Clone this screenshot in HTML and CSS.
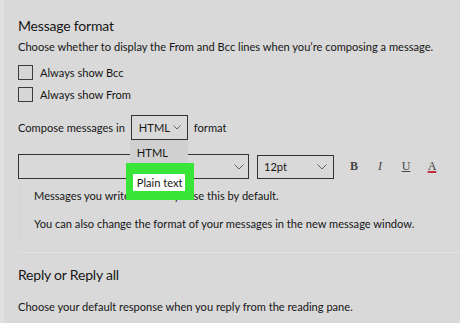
FILE: index.html
```html
<!DOCTYPE html>
<html lang="en">
<head>
    <meta charset="utf-8" />
    <title>Message format</title>
    <link rel="stylesheet" href="styles.css">
</head>
<body>
    <div class="pane">
        <section class="group first">
            <h2>Message format</h2>
            <p class="desc">Choose whether to display the From and Bcc lines when you’re composing a message.</p>
            <label class="check"><span class="box"></span>Always show Bcc</label>
            <label class="check"><span class="box"></span>Always show From</label>

            <div class="compose">
                <span>Compose messages in</span>
                <div class="picker">
                    <div class="select format">
                        <span>HTML</span>
                        <svg class="chev" width="8" height="5" viewBox="0 0 8 5"><path d="M0.5 0.5 L4 4 L7.5 0.5" fill="none" stroke="#555" stroke-width="0.9"/></svg>
                    </div>
                    <div class="menu">
                        <div class="item">HTML</div>
                        <div class="picked"><span>Plain text</span></div>
                    </div>
                </div>
                <span>format</span>
            </div>

            <div class="toolbar">
                <div class="select font">
                    <span></span>
                    <svg class="chev" width="10" height="6" viewBox="0 0 10 6"><path d="M0.5 0.5 L5 5 L9.5 0.5" fill="none" stroke="#555" stroke-width="0.9"/></svg>
                </div>
                <div class="select size">
                    <span>12pt</span>
                    <svg class="chev" width="10" height="6" viewBox="0 0 10 6"><path d="M0.5 0.5 L5 5 L9.5 0.5" fill="none" stroke="#555" stroke-width="0.9"/></svg>
                </div>
                <span class="tool bold">B</span>
                <span class="tool italic">I</span>
                <span class="tool under">U</span>
                <span class="tool color">A</span>
            </div>

            <div class="note">
                <p>Messages you write will always use this by default.</p>
                <p>You can also change the format of your messages in the new message window.</p>
            </div>
        </section>

        <section class="group second">
            <h2>Reply or Reply all</h2>
            <p class="desc">Choose your default response when you reply from the reading pane.</p>
        </section>
    </div>
</body>
</html>
```

FILE: styles.css
```css
/* Pannello impostazioni */
body {
    margin: 0;
    background-color: #d9d9d9;
    font-family: Lato, "Open Sans", sans-serif;
    color: #161616;
    overflow: hidden;
}

.pane {
    border-left: 4px solid #e1e1e1;
    height: 323px;
    box-sizing: border-box;
    padding-left: 14px;
    overflow: hidden;
}

.group.first {
    padding-top: 16px;
    padding-bottom: 12px;
    border-bottom: 1px solid #e2e2e2;
}

.group.second {
    padding-top: 12px;
}

h2 {
    margin: 0;
    font-size: 14px;
    font-weight: 400;
    line-height: 20px;
    letter-spacing: -0.2px;
}

.desc {
    margin: 3px 0 0;
    font-size: 11.1px;
    line-height: 16px;
}

.second .desc {
    margin-top: 14px;
}

.check {
    display: flex;
    align-items: center;
    gap: 7px;
    height: 15px;
    font-size: 11.1px;
    margin-top: 10px;
}

.check + .check {
    margin-top: 7px;
}

.box {
    width: 13px;
    height: 13px;
    border: 1px solid #3c3c3c;
    background-color: #d6d6d6;
}

.compose {
    display: flex;
    align-items: center;
    gap: 6px;
    font-size: 11.1px;
    margin-top: 13px;
}

.picker {
    position: relative;
}

.select {
    display: flex;
    align-items: center;
    justify-content: space-between;
    box-sizing: border-box;
    border: 1px solid #333333;
    font-size: 11.1px;
}

.select.format {
    width: 57px;
    height: 25px;
    padding: 0 6px 0 7px;
}

/* menu a tendina aperto */
.menu {
    position: absolute;
    left: -1px;
    top: 25px;
    width: 58px;
    font-size: 11.1px;
    z-index: 2;
}

.menu .item {
    height: 20px;
    line-height: 20px;
    padding: 3px 0 0 7px;
    background-color: #d0d0d0;
}

.menu .picked {
    position: absolute;
    left: -4px;
    top: 23px;
    width: 68px;
    height: 37px;
    box-sizing: border-box;
    padding: 11px 9px 9px 7px;
    background-color: #38e538;
}

.menu .picked span {
    display: block;
    height: 17px;
    line-height: 17px;
    padding-left: 4px;
    background-color: #ffffff;
    white-space: nowrap;
}

.toolbar {
    display: flex;
    align-items: center;
    margin-top: 14px;
}

.select.font {
    width: 231px;
    height: 25px;
    padding: 0 4px 0 7px;
}

.select.size {
    width: 77px;
    height: 24px;
    margin-left: 8px;
    padding: 0 6px 0 6px;
}

.tool {
    font-family: "Liberation Serif", serif;
    font-size: 12px;
    color: #444444;
    width: 26px;
    text-align: center;
}

.tool.bold {
    margin-left: 7px;
    font-weight: 700;
}

.tool.italic {
    font-style: italic;
}

.tool.under {
    text-decoration: underline;
}

.tool.color {
    text-decoration: underline;
    text-decoration-color: #c0303a;
    text-decoration-thickness: 1.5px;
}

.note {
    margin: 4px 0 0 2px;
    padding: 5px 0 8px 13px;
    border-left: 1px solid #d3d3d3;
    font-size: 11.1px;
    line-height: 16px;
}

.note p {
    margin: 0 0 12px;
}

.note p:last-child {
    margin-bottom: 0;
}
```
